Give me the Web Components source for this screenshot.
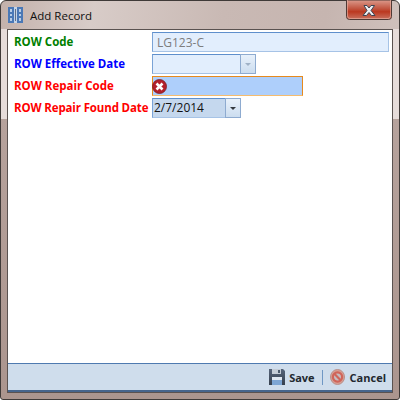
<!DOCTYPE html>
<html><head><meta charset="utf-8">
<style>
html,body{margin:0;padding:0;width:400px;height:400px;overflow:hidden;background:#fff}
</style></head><body>
<template id="t-win">
<style>
:host{display:flex;flex-direction:column;box-sizing:border-box;width:400px;height:400px;border:1px solid #3f3a38;border-radius:6px 6px 3px 3px;padding:0 6px 6px 6px;
background:linear-gradient(to bottom,transparent 0,transparent 28px,#e6dcda 28px,#e6dcda 118px,#b6a29c 118px,#ab958e 100%),linear-gradient(100deg,#c3b1ab 0%,#d8ccc8 20%,#c9b9b4 48%,#c6b5b0 70%,#d6cac6 100%);font:12px "Open Sans","Liberation Sans",sans-serif;position:relative}
.title{display:flex;align-items:center;gap:7px;height:28px;flex:none;font:11.500px "Open Sans","Liberation Sans",sans-serif;color:#101010}
.close{position:absolute;top:-1px;right:7px;width:46px;height:20px}
.body{flex:1;display:flex;flex-direction:column;border:1px solid #5a5250;background:#fff;min-height:0}
.main{flex:1;display:flex;flex-direction:column;min-height:0}
</style>
<div class="title"><slot name="icon"></slot><span>Add Record</span></div>
<svg class="close" viewBox="0 0 46 20">
<defs><linearGradient id="cg" x1="0" y1="0" x2="0" y2="1"><stop offset="0" stop-color="#dc9a8c"/><stop offset=".45" stop-color="#c1543f"/><stop offset=".6" stop-color="#bb3820"/><stop offset="1" stop-color="#c97361"/></linearGradient></defs>
<path d="M.5 0V16.500Q.5 19.500 3.500 19.500H42.500Q45.500 19.500 45.500 16.500V0Z" fill="url(#cg)" stroke="#4f3a36"/>
<path d="M1.500 0V16Q1.500 18.500 4 18.500H42Q44.500 18.500 44.500 16V0" fill="none" stroke="#e8b5a8" stroke-opacity=".6"/>
<path d="M18 5.500H21L23 8 25 5.500H28.500L25 10.500 29 15.500H25.500L23 12.500 20.500 15.500H17L21 10.500Z" fill="#eef0f4" stroke="#3c4452" stroke-width="1"/>
</svg>
<div class="body"><div class="main"><slot></slot></div><slot name="footer"></slot></div>
</template>

<template id="t-row">
<style>
:host{display:flex;align-items:center;height:22px;flex:none}
.l{width:138px;flex:none;padding:0 0 2px 6px;font:bold 11.500px "Open Sans","Liberation Sans",sans-serif;white-space:nowrap;color:var(--c)}
</style>
<span class="l"><slot name="label"></slot></span><slot></slot>
</template>

<template id="t-text">
<style>
:host{display:flex;align-items:center;box-sizing:border-box;height:20px;border:1px solid #a6c3e6;border-top-color:#5e8fcc;border-left-color:#7aa3d6;background:#e2eefd;font:12px "Open Sans","Liberation Sans",sans-serif;color:#7d7d7d;padding-left:4px}
:host([err]){background:#aecffb;border-color:#e68a1e;border-bottom-color:#f5bc6e;padding-left:0}
</style>
<slot></slot>
</template>

<template id="t-date">
<style>
:host{display:flex;box-sizing:border-box;height:20px;width:104px;background:#e2eefd;border:1px solid #a6c3e6;border-top-color:#5e8fcc;border-left-color:#7aa3d6;font:12px "Open Sans","Liberation Sans",sans-serif;color:#111}
:host([filled]){width:89px;background:#c5d8ee}
.v{flex:1;padding-left:1px;line-height:18px;white-space:nowrap}
.b{flex:none;box-sizing:border-box;width:16px;margin:-1px -1px -1px 0;border:1px solid #8eabd0;background:linear-gradient(#e8f1fb,#ccddef);display:flex;align-items:center;justify-content:center}
.b i{display:block;width:0;height:0;border:3px solid transparent;border-top:3px solid #9fb1c6;border-bottom:0}
:host([filled]) .b i{border-top-color:#33393f}
</style>
<span class="v"><slot></slot></span><span class="b"><i></i></span>
</template>

<template id="t-foot">
<style>
:host{display:flex;align-items:center;justify-content:flex-end;flex:none;box-sizing:border-box;height:29px;background:#cfddec;border-top:1px solid #4f7ab0;border-bottom:2px solid #47658c;padding:0 6px 0 0;font:bold 11px "Open Sans","Liberation Sans",sans-serif;color:#22282f}
.sep{width:1px;height:15px;background:#6f97c4;margin:0 7px}
svg{flex:none}
.s{margin-right:4px}.c{margin-right:5px}
</style>
<svg class="s" width="16" height="16" viewBox="0 0 16 16">
<defs><linearGradient id="sg" x1="0" y1="0" x2="0" y2="1"><stop offset="0" stop-color="#56647a"/><stop offset="1" stop-color="#36404e"/></linearGradient></defs>
<path d="M0 0H14L16 2V16H0Z" fill="url(#sg)"/><rect x="3" y="0" width="9" height="5" fill="#c4ccd6"/><rect x="9" y="1" width="2" height="3" fill="#4c5a6c"/><rect x="3" y="8" width="10" height="8" fill="#7ea6d4"/><rect x="3" y="8" width="10" height="3" fill="#dfe7f1"/>
</svg><span>Save</span><span class="sep"></span>
<svg class="c" width="15" height="16" viewBox="0 0 15 16"><ellipse cx="7.500" cy="8" rx="7" ry="7.500" fill="#d89e94" stroke="#b9908a"/><circle cx="7.500" cy="8" r="4.600" fill="#c6bcc0" stroke="#d0655a" stroke-width="2.200"/><path d="M4.300 4.800L10.700 11.200" stroke="#d0655a" stroke-width="2.200"/></svg><span>Cancel</span>
</template>

<script>
for (const [tag,id] of [['x-window','t-win'],['x-row','t-row'],['x-text','t-text'],['x-date','t-date'],['x-foot','t-foot']]) {
  customElements.define(tag, class extends HTMLElement {
    constructor(){super();this.attachShadow({mode:'open'}).appendChild(document.getElementById(id).content.cloneNode(true));}
    connectedCallback(){ if(this.hasAttribute('color')) this.style.setProperty('--c',this.getAttribute('color')); }
  });
}
</script>

<x-window>
<svg slot="icon" width="15" height="16" viewBox="0 0 15 16" style="display:block;margin-left:1px"><rect width="15" height="16" fill="#4a78b6"/><rect x="6" y="0" width="3" height="16" fill="#c4d4e8"/><path d="M2 2H4V5H2ZM11 2H13V5H11ZM2 7H4V9H2ZM11 7H13V9H11ZM2 11H4V14H2ZM11 11H13V14H11Z" fill="#b8cde6"/><path d="M7 2H8V14H7Z" fill="#5c6f8c"/></svg>
<div style="height:1px;flex:none"></div>
<x-row color="#008000"><span slot="label">ROW Code</span><x-text style="width:237px">LG123-C</x-text></x-row>
<x-row color="#0000ff"><span slot="label">ROW Effective Date</span><x-date></x-date></x-row>
<x-row color="#ff0000"><span slot="label">ROW Repair Code</span><x-text err style="width:151px"><svg width="15" height="15" viewBox="0 0 15 15" style="display:block;margin-left:-1px;flex:none"><circle cx="7.500" cy="7.500" r="7" fill="#b3202c" stroke="#7c1c22" stroke-width=".8"/><path d="M4.500 4.500L10.500 10.500M10.500 4.500L4.500 10.500" stroke="#fff" stroke-width="2.600"/></svg></x-text></x-row>
<x-row color="#ff0000"><span slot="label" style="letter-spacing:-.14px">ROW Repair Found Date</span><x-date filled>2/7/2014</x-date></x-row>
<x-foot slot="footer"></x-foot>
</x-window>
</body></html>
